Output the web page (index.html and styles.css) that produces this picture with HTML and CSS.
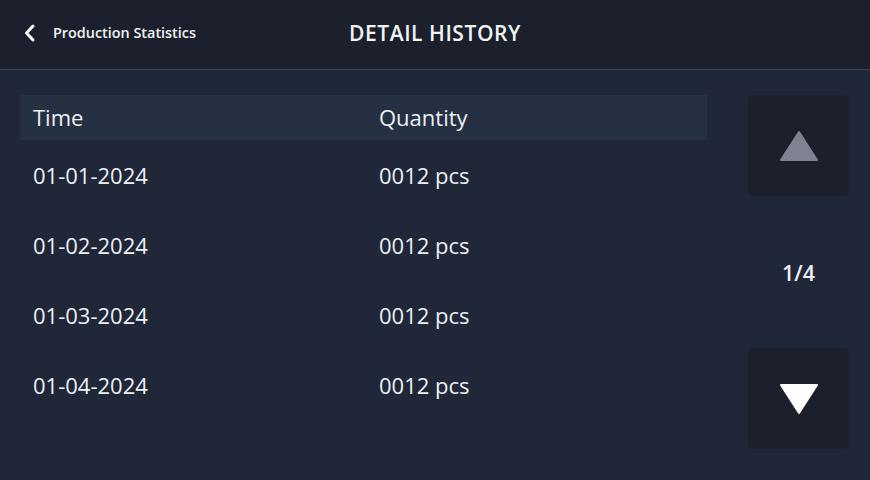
FILE: index.html
```html
<!DOCTYPE html>
<html lang="en">
<head>
<meta charset="utf-8">
<title>Detail History</title>
<link rel="stylesheet" href="styles.css">
</head>
<body>
<header class="topbar">
  <div class="back">
    <svg class="chev" width="14" height="20" viewBox="0 0 14 20"><path d="M10 3 L3.5 10 L10 17" fill="none" stroke="#fff" stroke-width="3" stroke-linecap="round" stroke-linejoin="round"/></svg>
    <span class="back-label">Production Statistics</span>
  </div>
  <h1 class="title">DETAIL HISTORY</h1>
</header>
<main class="content">
  <section class="table">
    <div class="row head"><span class="c1">Time</span><span class="c2">Quantity</span></div>
    <div class="row"><span class="c1">01-01-2024</span><span class="c2">0012 pcs</span></div>
    <div class="row"><span class="c1">01-02-2024</span><span class="c2">0012 pcs</span></div>
    <div class="row"><span class="c1">01-03-2024</span><span class="c2">0012 pcs</span></div>
    <div class="row"><span class="c1">01-04-2024</span><span class="c2">0012 pcs</span></div>
  </section>
  <aside class="pager">
    <button class="pbtn" aria-label="Previous page">
      <svg width="40" height="32" viewBox="0 0 40 32"><path d="M20 2 L38 30 L2 30 Z" fill="#7d8391" stroke="#7d8391" stroke-width="2" stroke-linejoin="round"/></svg>
    </button>
    <div class="page">1/4</div>
    <button class="pbtn" aria-label="Next page">
      <svg width="40" height="32" viewBox="0 0 40 32"><path d="M2 2 L38 2 L20 30 Z" fill="#fff" stroke="#fff" stroke-width="2" stroke-linejoin="round"/></svg>
    </button>
  </aside>
</main>
</body>
</html>
```
FILE: styles.css
```css
* { box-sizing: border-box; }
html, body { margin: 0; padding: 0; }
body {
  width: 870px;
  height: 480px;
  background: #1f2738;
  font-family: "Open Sans", "Noto Sans", sans-serif;
  color: #eef0f3;
  overflow: hidden;
}
.topbar {
  height: 70px;
  background: #1b202c;
  border-bottom: 1px solid #3a4454;
  display: flex;
  align-items: center;
  position: relative;
}
.back {
  display: flex;
  align-items: center;
  padding-left: 23px;
  gap: 16px;
  margin-top: -4px;
}
.chev { display: block; }
.back-label {
  font-size: 14.4px;
  font-weight: 600;
  color: #f2f3f5;
}
.title {
  position: absolute;
  left: 0;
  right: 0;
  top: 0;
  margin: 0;
  text-align: center;
  line-height: 66px;
  font-size: 21px;
  font-weight: 600;
  letter-spacing: 0.55px;
  color: #f2f3f5;
}
.content {
  display: flex;
  padding: 25px 21px 0 20px;
  gap: 41px;
}
.table { width: 687px; }
.row {
  display: flex;
  align-items: center;
  height: 70px;
  font-size: 22px;
  padding-left: 13px;
  color: #eef0f3;
}
.row.head {
  height: 45px;
  padding-bottom: 1px;
  background: #253043;
}
.c1 { width: 346px; }
.c2 { flex: 1; }
.pager {
  width: 101px;
  display: flex;
  flex-direction: column;
  align-items: center;
}
.pbtn {
  width: 101px;
  height: 101px;
  border: 0;
  border-radius: 5px;
  background: #1b202c;
  display: flex;
  align-items: center;
  justify-content: center;
  padding: 0;
}
.pbtn svg { display: block; }
.page {
  height: 152px;
  display: flex;
  align-items: center;
  justify-content: center;
  font-size: 21.5px;
  font-weight: 600;
  color: #eef0f3;
}
```
